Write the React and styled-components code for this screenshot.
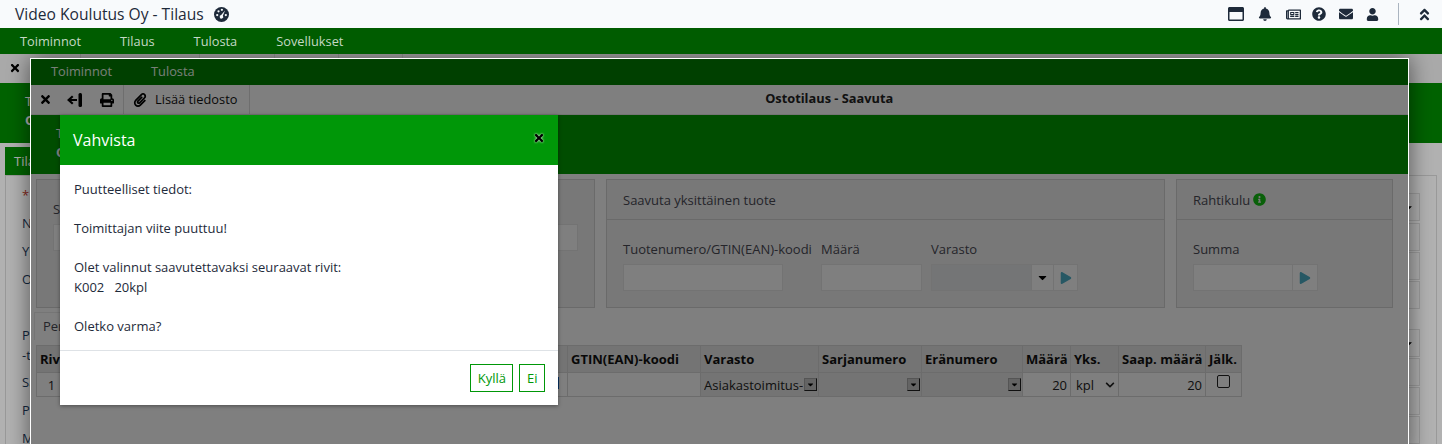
import styled, { createGlobalStyle } from 'styled-components'
import {
  FaRegWindowMaximize, FaBell, FaRegNewspaper, FaQuestionCircle, FaEnvelope, FaUser,
  FaAngleDoubleUp, FaTimes, FaPrint, FaPaperclip, FaInfoCircle, FaCaretDown, FaPlay, FaChevronDown,
} from 'react-icons/fa'

const GlobalStyle = createGlobalStyle`
  html, body { margin: 0; padding: 0; background: #fff; }
  body { font-family: "Open Sans", "Noto Sans", sans-serif; font-size: 13px; color: #1e2a3a; }
`

const Page = styled.div`
  position: relative;
  width: 1442px;
  height: 444px;
  overflow: hidden;
`

/* top of the app */
const AppBar = styled.header`
  position: relative;
  z-index: 3;
`
const TitleRow = styled.div`
  height: 28px;
  background: #f8fafc;
  display: flex;
  align-items: center;
  padding: 0 0 0 15px;
`
const AppTitle = styled.div`
  font-size: 15.6px;
  color: #1e2a3a;
`
const TitleIcon = styled.svg`
  margin-left: 10px;
  width: 15px;
  height: 15px;
`
const HeadIcons = styled.div`
  margin-left: auto;
  display: flex;
  align-items: center;
  height: 100%;
  color: #1e2a3a;
`
const HeadIcon = styled.span`
  width: ${p => p.$w || 27}px;
  margin: 0 ${p => -(p.$nudge || 0)}px 0 ${p => p.$nudge || 0}px;
  display: flex;
  justify-content: center;
  font-size: ${p => p.$size || 14}px;
`
const HeadDivider = styled.span`
  width: 1px;
  height: 22px;
  background: #aab4c0;
  margin: 0 18px 0 12px;
`
const CollapseIcon = styled(FaAngleDoubleUp)`
  font-size: 15px;
  margin-right: 10px;
`
const MenuBar = styled.nav`
  display: flex;
  height: ${p => p.$height}px;
  align-items: center;
  padding-left: ${p => p.$pad}px;
  padding-bottom: ${p => p.$lift || 0}px;
  box-sizing: border-box;
  background: ${p => p.$bg};
`
const MenuItem = styled.span`
  font-size: 12.8px;
  color: ${p => p.$color || '#c4d8c4'};
  margin-right: 39px;
`

/* page behind the window, dimmed */
const Back = styled.div`
  position: absolute;
  inset: 54px 0 0 0;
  background: #fff;
  &::after {
    content: '';
    position: absolute;
    inset: 0;
    background: rgba(0, 0, 0, 0.3);
  }
`
const BackTabs = styled.div`
  height: 29px;
  display: flex;
  background: #f4f4f4;
`
const BackTab = styled.div`
  width: ${p => p.$w}px;
  height: 4px;
  border-right: 1px solid #ddd;
`
const BackClose = styled(FaTimes)`
  position: absolute;
  left: 9px;
  top: 8px;
  font-size: 12px;
  color: #000;
`
const Band = styled.div`
  height: ${p => p.$h}px;
  background: ${p => p.$bg};
  color: #fff;
  padding-left: ${p => p.$pad}px;
  padding-top: ${p => p.$top}px;
  box-sizing: border-box;
  line-height: 19px;
  font-size: 13px;
`
const BandStrong = styled.div`
  font-weight: 700;
`
const BackTabLabel = styled.div`
  margin: 4px 0 0 5px;
  width: 60px;
  height: 28px;
  background: #008f00;
  color: #fff;
  padding-left: 9px;
  line-height: 28px;
  box-sizing: border-box;
`
const BackPanel = styled.div`
  margin: 0 5px 0 5px;
  height: 300px;
  border: 1px solid #ddd;
  display: flex;
  justify-content: space-between;
  padding: 0 16px 0 16px;
`
const BackLabels = styled.div`
  padding-top: 9px;
  color: #1c3a5c;
`
const BackLabel = styled.div`
  height: ${p => p.$h || 28}px;
  line-height: 20px;
  margin-bottom: ${p => p.$after || 0}px;
  color: ${p => p.$color || 'inherit'};
`
const BackInputs = styled.div`
  width: 60px;
  padding-top: 17px;
`
const BackInput = styled.div`
  height: 26px;
  border: 1px solid #e0e0e0;
  margin-bottom: ${p => p.$after || 0}px;
  display: flex;
  align-items: center;
  padding-right: 5px;
  justify-content: flex-end;
  font-size: 11px;
  color: #000;
  background: #fbfbfb;
`

/* the modal window */
const Win = styled.section`
  position: absolute;
  z-index: 2;
  left: 30px;
  top: 58px;
  width: 1379px;
  height: 400px;
  box-sizing: border-box;
  border: 1px solid #fff;
  background: #fff;
  box-shadow: 0 0 22px rgba(0, 0, 0, 0.55);
`
const Scrim = styled.div`
  position: absolute;
  inset: 0;
  background: rgba(0, 0, 0, 0.5);
`
const Toolbar = styled.div`
  height: 29px;
  display: flex;
  align-items: center;
  background: #fff;
  border-bottom: 1px solid #e8e8e8;
  box-sizing: content-box;
`
const ToolGroup = styled.div`
  display: flex;
  align-items: center;
  height: 100%;
  border-right: 1px solid #ddd;
`
const ToolIcon = styled.span`
  width: ${p => p.$w}px;
  display: flex;
  justify-content: center;
  font-size: ${p => p.$size || 14}px;
  color: #000;
`
const ToolText = styled.span`
  font-size: 12.8px;
  color: #111;
  margin: 0 12px 2px 0;
`
const ToolTitle = styled.div`
  flex: 1;
  text-align: center;
  font-size: 12.8px;
  font-weight: 700;
  color: #222;
  margin-bottom: 4px;
`
const PanelRow = styled.div`
  display: grid;
  grid-template-columns: 559px 559px 217px;
  gap: 11px;
  padding: 5px 0 0 5px;
`
const Panel = styled.div`
  height: 129px;
  box-sizing: border-box;
  border: 1px solid #d4d4d4;
  background: #f0f0f0;
`
const PanelHead = styled.div`
  height: 39px;
  border-bottom: 1px solid #d4d4d4;
  padding-left: 16px;
  display: flex;
  align-items: center;
  font-size: 13px;
  color: #4a4a55;
`
const InfoIcon = styled(FaInfoCircle)`
  margin-left: 3px;
  font-size: 13px;
  color: #12c012;
`
const PanelBody = styled.div`
  display: flex;
  padding: ${p => p.$top}px 16px 0;
`
const Field = styled.div`
  width: ${p => p.$w}px;
`
const FieldLabel = styled.div`
  font-size: 13px;
  line-height: 18px;
  margin-bottom: 6px;
  color: #4a4a55;
  white-space: nowrap;
`
const InputWrap = styled.div`
  display: flex;
  height: 27px;
`
const Input = styled.div`
  width: ${p => p.$w}px;
  box-sizing: border-box;
  border: 1px solid #e6e6e6;
  background: ${p => (p.$disabled ? '#e8eaec' : '#fff')};
`
const AddOn = styled.div`
  width: ${p => p.$w}px;
  box-sizing: border-box;
  border: 1px solid #e6e6e6;
  border-left: 0;
  background: #fff;
  display: flex;
  align-items: center;
  justify-content: center;
  font-size: ${p => p.$size}px;
  color: ${p => p.$color};
`

const TabStrip = styled.div`
  margin: 4px 0 5px 3px;
  height: 28px;
  display: flex;
`
const DetailTab = styled.div`
  width: 120px;
  border: 1px solid #eaeaea;
  border-bottom: 0;
  padding-left: 8px;
  line-height: 27px;
  color: #4a4a55;
`
const Grid = styled.table`
  margin-left: 5px;
  border-collapse: collapse;
  table-layout: fixed;
  width: 1205px;
  font-size: 13px;
`
const Th = styled.th`
  height: 26px;
  background: #e8e8e8;
  border: 1px solid #d8d8d8;
  padding: 0 0 0 3px;
  text-align: left;
  font-weight: 700;
  color: #111;
  white-space: nowrap;
  overflow: hidden;
`
const Td = styled.td`
  height: 23px;
  padding: 0 ${p => p.$right || 3}px 0 ${p => p.$left || 3}px;
  border: 1px solid #d8d8d8;
  text-align: ${p => p.$align || 'left'};
  color: #222;
  white-space: nowrap;
  background: ${p => p.$bg || 'transparent'};
  overflow: hidden;
`
const CellFlex = styled.div`
  display: flex;
  align-items: center;
  justify-content: space-between;
`
const CellText = styled.span`
  overflow: hidden;
`
const MiniSelect = styled.span`
  flex: none;
  width: 13px;
  height: 13px;
  box-sizing: border-box;
  background: #c8c8c8;
  border: 1px solid #aaa;
  border-right-color: #222;
  border-bottom-color: #222;
  display: flex;
  align-items: center;
  justify-content: center;
  font-size: 9px;
  color: #000;
`
const LinkMark = styled.span`
  display: block;
  margin: -3px 5px 0 auto;
  width: 3px;
  height: 12px;
  background: #0e63c4;
`
const Check = styled.span`
  display: block;
  width: 11px;
  height: 11px;
  margin: -6px auto 0;
  border: 1px solid #222;
  border-radius: 2px;
  background: #fff;
`

/* confirm dialog on top of the window */
const Dialog = styled.div`
  position: absolute;
  left: 29px;
  top: 56px;
  width: 498px;
  height: 290px;
  background: #fff;
  box-shadow: 0 1px 4px rgba(0, 0, 0, 0.4);
  display: flex;
  flex-direction: column;
`
const DialogHead = styled.div`
  height: 50px;
  flex: none;
  background: #009708;
  color: #fff;
  display: flex;
  align-items: center;
  justify-content: space-between;
  padding: 0 13px;
  font-size: 16px;
`
const DialogClose = styled(FaTimes)`
  font-size: 12px;
  color: #000;
  margin: 0 0 4px;
  filter: drop-shadow(0 0 1px #fff);
`
const DialogBody = styled.div`
  flex: 1;
  padding: 15px 14px 0;
  font-size: 13px;
  line-height: 19.5px;
  color: #1e2a3a;
  white-space: pre-line;
`
const DialogFoot = styled.div`
  height: 54px;
  flex: none;
  border-top: 1px solid #dee2e6;
  display: flex;
  justify-content: flex-end;
  align-items: center;
  gap: 6px;
  padding: 0 13px 0 0;
`
const GreenButton = styled.button`
  height: 28px;
  padding: 0 6.5px;
  background: #fff;
  border: 1px solid #009708;
  border-radius: 0;
  color: #009708;
  font: 13px "Open Sans", sans-serif;
`

const BackIcon = () => (
  <svg width="15" height="14" viewBox="0 0 15 14" fill="#000">
    <rect x="11.5" y="0" width="3.5" height="14" rx="1.5" />
    <path d="M0 7 L5 2.5 L6.5 4 L4.2 6 H10 V8 H4.2 L6.5 10 L5 11.5 Z" />
  </svg>
)

const GaugeIcon = () => (
  <TitleIcon viewBox="0 0 16 16">
    <circle cx="8" cy="8" r="8" fill="#1e2a3a" />
    <g fill="#f8fafc">
      <circle cx="3.4" cy="8.6" r="1.2" />
      <circle cx="4.8" cy="4.6" r="1.2" />
      <circle cx="8.4" cy="3" r="1.2" />
      <circle cx="12.6" cy="8.6" r="1.2" />
    </g>
    <path d="M11.8 3.6 L9.4 9.2 A1.9 1.9 0 1 1 7.6 8.6 Z" fill="#f8fafc" />
  </TitleIcon>
)

const backLabels = [
  { text: '*', color: '#c0392b' },
  { text: 'Nimi' },
  { text: 'Yritys' },
  { text: 'Osoite', after: 28 },
  { text: 'Postinumero', h: 20 },
  { text: '-toimipaikka', h: 27 },
  { text: 'Sähköposti' },
  { text: 'Puhelin' },
  { text: 'Maa' },
]

export default function App() {
  return (
    <Page>
      <GlobalStyle />
      <AppBar>
        <TitleRow>
          <AppTitle>Video Koulutus Oy - Tilaus</AppTitle>
          <GaugeIcon />
          <HeadIcons>
            <HeadIcon $size={16} $w={31}><FaRegWindowMaximize /></HeadIcon>
            <HeadIcon><FaBell /></HeadIcon>
            <HeadIcon $size={15} $nudge={2}><FaRegNewspaper /></HeadIcon>
            <HeadIcon><FaQuestionCircle /></HeadIcon>
            <HeadIcon><FaEnvelope /></HeadIcon>
            <HeadIcon $size={13}><FaUser /></HeadIcon>
            <HeadDivider />
            <CollapseIcon />
          </HeadIcons>
        </TitleRow>
        <MenuBar $height={26} $pad={20} $bg="#005c00">
          <MenuItem>Toiminnot</MenuItem>
          <MenuItem>Tilaus</MenuItem>
          <MenuItem>Tulosta</MenuItem>
          <MenuItem>Sovellukset</MenuItem>
        </MenuBar>
      </AppBar>

      <Back>
        <BackTabs>
          <BackTab $w={80} />
          <BackTab $w={118} />
          <BackTab $w={74} />
          <BackTab $w={63} />
          <BackTab $w={63} />
          <BackClose />
        </BackTabs>
        <Band $h={60} $pad={25} $top={9} $bg="#008f00">
          Tilaus
          <BandStrong>Ostotilaus</BandStrong>
        </Band>
        <BackTabLabel>Tilaus</BackTabLabel>
        <BackPanel>
          <BackLabels>
            {backLabels.map((l, i) => (
              <BackLabel key={i} $color={l.color} $after={l.after} $h={l.h}>{l.text}</BackLabel>
            ))}
          </BackLabels>
          <BackInputs>
            <BackInput $after={2}><FaCaretDown /></BackInput>
            <BackInput $after={1} />
            <BackInput $after={1} />
            <BackInput $after={20} />
            <BackInput $after={1}><FaCaretDown /></BackInput>
            <BackInput $after={1} />
            <BackInput $after={1} />
            <BackInput />
          </BackInputs>
        </BackPanel>
      </Back>

      <Win>
        <MenuBar $height={26} $pad={20} $lift={2} $bg="#008000">
          <MenuItem $color="#f0fff0">Toiminnot</MenuItem>
          <MenuItem $color="#f0fff0">Tulosta</MenuItem>
        </MenuBar>
        <Toolbar>
          <ToolGroup>
            <ToolIcon $w={28} $size={13}><FaTimes /></ToolIcon>
            <ToolIcon $w={31}><BackIcon /></ToolIcon>
            <ToolIcon $w={33}><FaPrint /></ToolIcon>
          </ToolGroup>
          <ToolGroup>
            <ToolIcon $w={31}><FaPaperclip /></ToolIcon>
            <ToolText>Lisää tiedosto</ToolText>
          </ToolGroup>
          <ToolTitle>Ostotilaus - Saavuta</ToolTitle>
        </Toolbar>
        <Band $h={59} $pad={25} $top={9} $bg="#009a00">
          Tilaus
          <BandStrong>Ostotilaus</BandStrong>
        </Band>
        <PanelRow>
          <Panel>
            <PanelBody $top={20}>
              <Field $w={525}>
                <FieldLabel>Saavuta tilausrivit</FieldLabel>
                <InputWrap><Input $w={525} /></InputWrap>
              </Field>
            </PanelBody>
          </Panel>
          <Panel>
            <PanelHead>Saavuta yksittäinen tuote</PanelHead>
            <PanelBody $top={20}>
              <Field $w={198}>
                <FieldLabel>Tuotenumero/GTIN(EAN)-koodi</FieldLabel>
                <InputWrap><Input $w={160} /></InputWrap>
              </Field>
              <Field $w={110}>
                <FieldLabel>Määrä</FieldLabel>
                <InputWrap><Input $w={101} /></InputWrap>
              </Field>
              <Field>
                <FieldLabel>Varasto</FieldLabel>
                <InputWrap>
                  <Input $w={101} $disabled />
                  <AddOn $w={22} $size={13} $color="#000"><FaCaretDown /></AddOn>
                  <AddOn $w={24} $size={12} $color="#4fb0c8"><FaPlay /></AddOn>
                </InputWrap>
              </Field>
            </PanelBody>
          </Panel>
          <Panel>
            <PanelHead>Rahtikulu<InfoIcon /></PanelHead>
            <PanelBody $top={20}>
              <Field>
                <FieldLabel>Summa</FieldLabel>
                <InputWrap>
                  <Input $w={100} />
                  <AddOn $w={25} $size={12} $color="#4fb0c8"><FaPlay /></AddOn>
                </InputWrap>
              </Field>
            </PanelBody>
          </Panel>
        </PanelRow>
        <TabStrip><DetailTab>Perustiedot</DetailTab></TabStrip>
        <Grid>
          <colgroup>
            <col style={{ width: 30 }} />
            <col style={{ width: 250 }} />
            <col style={{ width: 251 }} />
            <col style={{ width: 133 }} />
            <col style={{ width: 118 }} />
            <col style={{ width: 103 }} />
            <col style={{ width: 101 }} />
            <col style={{ width: 48 }} />
            <col style={{ width: 48 }} />
            <col style={{ width: 87 }} />
            <col style={{ width: 36 }} />
          </colgroup>
          <thead>
            <tr>
              <Th>Rivi</Th>
              <Th>Tuotenumero</Th>
              <Th>Tuote</Th>
              <Th>GTIN(EAN)-koodi</Th>
              <Th>Varasto</Th>
              <Th>Sarjanumero</Th>
              <Th>Eränumero</Th>
              <Th>Määrä</Th>
              <Th>Yks.</Th>
              <Th>Saap. määrä</Th>
              <Th>Jälk.</Th>
            </tr>
          </thead>
          <tbody>
            <tr>
              <Td $align="center">1</Td>
              <Td>K002</Td>
              <Td><LinkMark /></Td>
              <Td $bg="#fff" />
              <Td $bg="#e8e8e8" $right={1}><CellFlex><CellText>Asiakastoimitus-</CellText><MiniSelect><FaCaretDown /></MiniSelect></CellFlex></Td>
              <Td $bg="#e8e8e8" $right={1}><CellFlex><span /><MiniSelect><FaCaretDown /></MiniSelect></CellFlex></Td>
              <Td $bg="#e8e8e8" $right={1}><CellFlex><span /><MiniSelect><FaCaretDown /></MiniSelect></CellFlex></Td>
              <Td $align="right">20</Td>
              <Td $left={5}><CellFlex>kpl<FaChevronDown size={10} /></CellFlex></Td>
              <Td $align="right">20</Td>
              <Td><Check /></Td>
            </tr>
          </tbody>
        </Grid>
        <Scrim />
        <Dialog>
          <DialogHead>
            Vahvista
            <DialogClose />
          </DialogHead>
          <DialogBody>
            {'Puutteelliset tiedot:\n\nToimittajan viite puuttuu!\n\nOlet valinnut saavutettavaksi seuraavat rivit:\nK002\u00a0\u00a0\u00a020kpl\n\nOletko varma?'}
          </DialogBody>
          <DialogFoot>
            <GreenButton>Kyllä</GreenButton>
            <GreenButton>Ei</GreenButton>
          </DialogFoot>
        </Dialog>
      </Win>
    </Page>
  )
}
